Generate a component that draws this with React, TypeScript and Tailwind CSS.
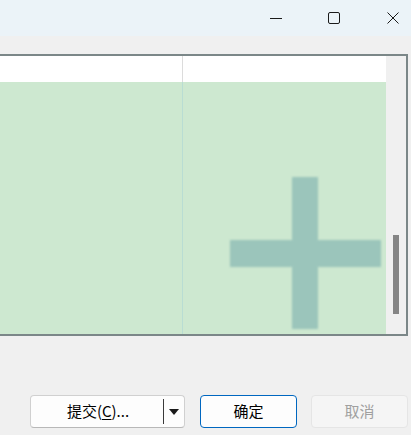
import React from "react";

const cjk = { fontFamily: '"Noto Sans CJK SC", "Liberation Sans", sans-serif' };

function TitleBar() {
  return (
    <div className="h-[36px] bg-[#ebf3f8] flex items-center justify-end">
      <svg width="12" height="12" viewBox="0 0 12 12" className="mr-[46px]">
        <path d="M0 6.5H12" stroke="#1a1a1a" strokeWidth="1" />
      </svg>
      <svg width="12" height="12" viewBox="0 0 12 12" className="mr-[47px]">
        <rect x="0.5" y="0.5" width="11" height="11" rx="1.5" fill="none" stroke="#1a1a1a" strokeWidth="1" />
      </svg>
      <svg width="12" height="12" viewBox="0 0 12 12" className="mr-[12px]">
        <path d="M0.5 0.5L11.5 11.5M11.5 0.5L0.5 11.5" stroke="#1a1a1a" strokeWidth="1" />
      </svg>
    </div>
  );
}

function Grid() {
  return (
    <div className="mt-[18px] mr-[3px] h-[282px] border-y-2 border-r-2 border-[#7b8788] flex bg-[#f0f0f0]">
      <div className="flex-1 flex flex-col">
        <div className="h-[26px] bg-white flex">
          <div className="w-[183px] border-r border-[#dcdcdc]" />
          <div className="flex-1" />
        </div>
        <div className="flex-1 bg-[#cde8d0] flex relative">
          <div className="w-[183px] border-r border-[#b9ddd3]" />
          <div className="flex-1" />
          <svg
            width="155"
            height="156"
            viewBox="0 0 155 156"
            className="absolute left-[228px] top-[95px] blur-[1px]"
          >
            <rect x="64" y="0" width="26" height="152" fill="#9bc5bb" />
            <rect x="2" y="63" width="151" height="27" fill="#9bc5bb" />
          </svg>
        </div>
      </div>
      <div className="w-[20px] flex flex-col items-center pt-[179px]">
        <div className="w-[6px] h-[79px] bg-[#858585]" />
      </div>
    </div>
  );
}

function Buttons() {
  return (
    <div className="flex justify-end gap-[14px] mr-[3px] mt-[59px]" style={cjk}>
      <div className="w-[155px] h-[33px] rounded-[4px] border border-[#d0d0d0] border-b-[#b8b8b8] bg-[#fdfdfd] flex items-center text-[15px] text-black">
        <div className="flex-1 text-center pl-[2px]">
          提交(<span className="underline underline-offset-2">C</span>)...
        </div>
        <div className="w-px h-[25px] bg-[#3a3a3a]" />
        <div className="w-[20px] flex justify-center">
          <svg width="10" height="6" viewBox="0 0 10 6">
            <path d="M0 0H10L5 6Z" fill="#1a1a1a" />
          </svg>
        </div>
      </div>
      <div className="w-[97px] h-[33px] ml-[1px] rounded-[4px] border border-[#0067c0] bg-[#fdfdfd] flex items-center justify-center text-[15px] text-black">
        确定
      </div>
      <div className="w-[97px] h-[33px] rounded-[4px] border border-[#e5e5e5] bg-[#f5f5f5] flex items-center justify-center text-[15px] text-[#a0a0a0]">
        取消
      </div>
    </div>
  );
}

export default function App() {
  return (
    <div className="w-[411px] h-[435px] bg-[#f0f0f0] overflow-hidden">
      <TitleBar />
      <Grid />
      <Buttons />
    </div>
  );
}
